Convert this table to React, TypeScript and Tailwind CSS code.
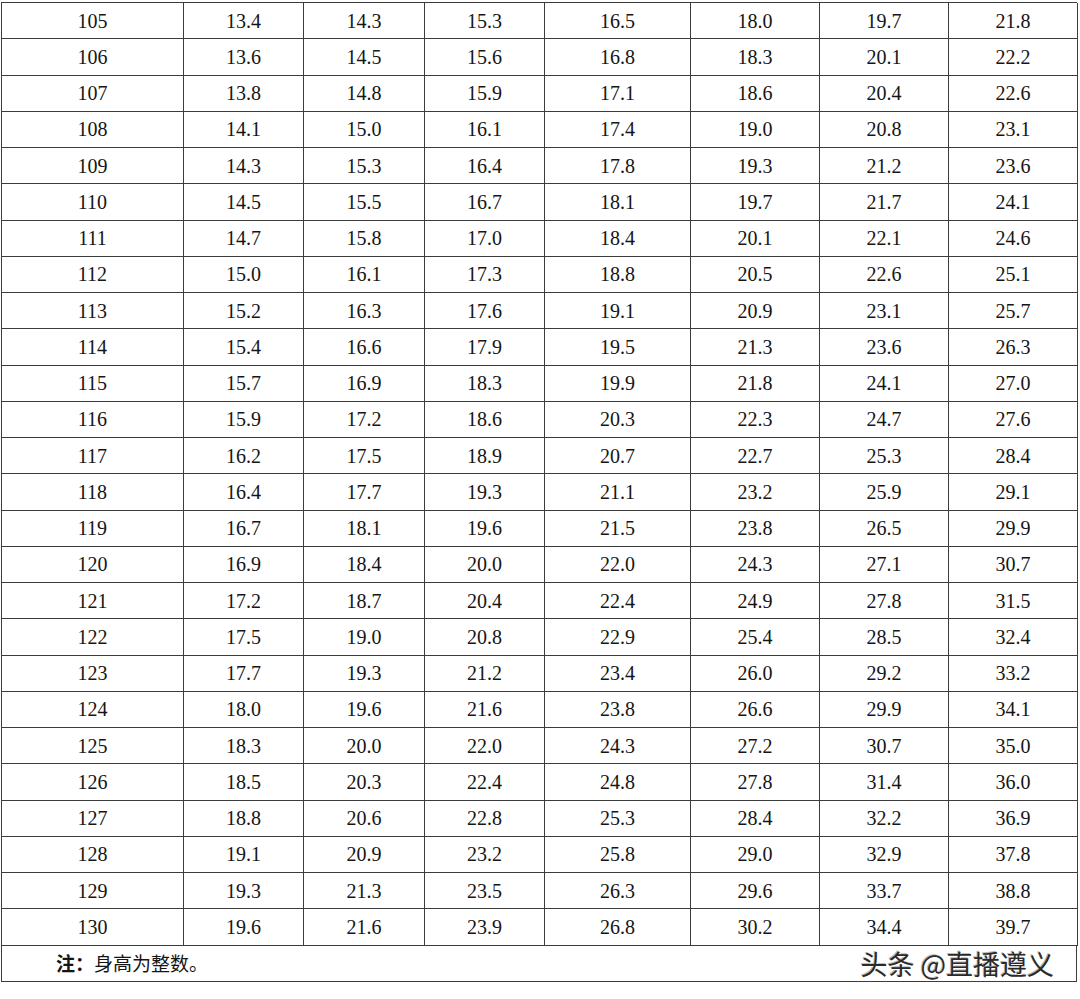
import React from "react";

const rows: string[][] = [
  ["105", "13.4", "14.3", "15.3", "16.5", "18.0", "19.7", "21.8"],
  ["106", "13.6", "14.5", "15.6", "16.8", "18.3", "20.1", "22.2"],
  ["107", "13.8", "14.8", "15.9", "17.1", "18.6", "20.4", "22.6"],
  ["108", "14.1", "15.0", "16.1", "17.4", "19.0", "20.8", "23.1"],
  ["109", "14.3", "15.3", "16.4", "17.8", "19.3", "21.2", "23.6"],
  ["110", "14.5", "15.5", "16.7", "18.1", "19.7", "21.7", "24.1"],
  ["111", "14.7", "15.8", "17.0", "18.4", "20.1", "22.1", "24.6"],
  ["112", "15.0", "16.1", "17.3", "18.8", "20.5", "22.6", "25.1"],
  ["113", "15.2", "16.3", "17.6", "19.1", "20.9", "23.1", "25.7"],
  ["114", "15.4", "16.6", "17.9", "19.5", "21.3", "23.6", "26.3"],
  ["115", "15.7", "16.9", "18.3", "19.9", "21.8", "24.1", "27.0"],
  ["116", "15.9", "17.2", "18.6", "20.3", "22.3", "24.7", "27.6"],
  ["117", "16.2", "17.5", "18.9", "20.7", "22.7", "25.3", "28.4"],
  ["118", "16.4", "17.7", "19.3", "21.1", "23.2", "25.9", "29.1"],
  ["119", "16.7", "18.1", "19.6", "21.5", "23.8", "26.5", "29.9"],
  ["120", "16.9", "18.4", "20.0", "22.0", "24.3", "27.1", "30.7"],
  ["121", "17.2", "18.7", "20.4", "22.4", "24.9", "27.8", "31.5"],
  ["122", "17.5", "19.0", "20.8", "22.9", "25.4", "28.5", "32.4"],
  ["123", "17.7", "19.3", "21.2", "23.4", "26.0", "29.2", "33.2"],
  ["124", "18.0", "19.6", "21.6", "23.8", "26.6", "29.9", "34.1"],
  ["125", "18.3", "20.0", "22.0", "24.3", "27.2", "30.7", "35.0"],
  ["126", "18.5", "20.3", "22.4", "24.8", "27.8", "31.4", "36.0"],
  ["127", "18.8", "20.6", "22.8", "25.3", "28.4", "32.2", "36.9"],
  ["128", "19.1", "20.9", "23.2", "25.8", "29.0", "32.9", "37.8"],
  ["129", "19.3", "21.3", "23.5", "26.3", "29.6", "33.7", "38.8"],
  ["130", "19.6", "21.6", "23.9", "26.8", "30.2", "34.4", "39.7"],
];

export default function App() {
  return (
    <div className="w-[1080px] h-[999px] bg-white pt-[2px] pl-[1px]">
      <div
        className="w-[1076px] border-l border-t border-[#3c3c3c] text-[#151515]"
        style={{ fontFamily: '"Liberation Serif", "Times New Roman", serif' }}
      >
        {rows.map((r, i) => (
          <div
            key={i}
            className="grid grid-cols-[182px_120px_121px_120px_146px_129px_129px_129px] h-[36.25px]"
          >
            {r.map((c, j) => (
              <div
                key={j}
                className="border-r border-b border-[#3c3c3c] flex items-center justify-center text-[20px] leading-none"
              >
                {c}
              </div>
            ))}
          </div>
        ))}
        <div className="h-[36px] border-r border-b border-[#3c3c3c] flex items-center justify-between pl-[54px] pr-[22px]">
          <span
            className="text-[19px] text-[#151515]"
            style={{ fontFamily: '"Noto Sans CJK SC", sans-serif' }}
          >
            <span className="font-bold">注：</span>身高为整数。
          </span>
          <span
            className="text-[27px] text-[#2a2a2a] leading-none"
            style={{
              fontFamily: '"Noto Sans CJK SC", sans-serif',
              textShadow: "1px 1px 0 #ffffff, -1px -1px 0 #bbbbbb",
            }}
          >
            头条 @直播遵义
          </span>
        </div>
      </div>
    </div>
  );
}
